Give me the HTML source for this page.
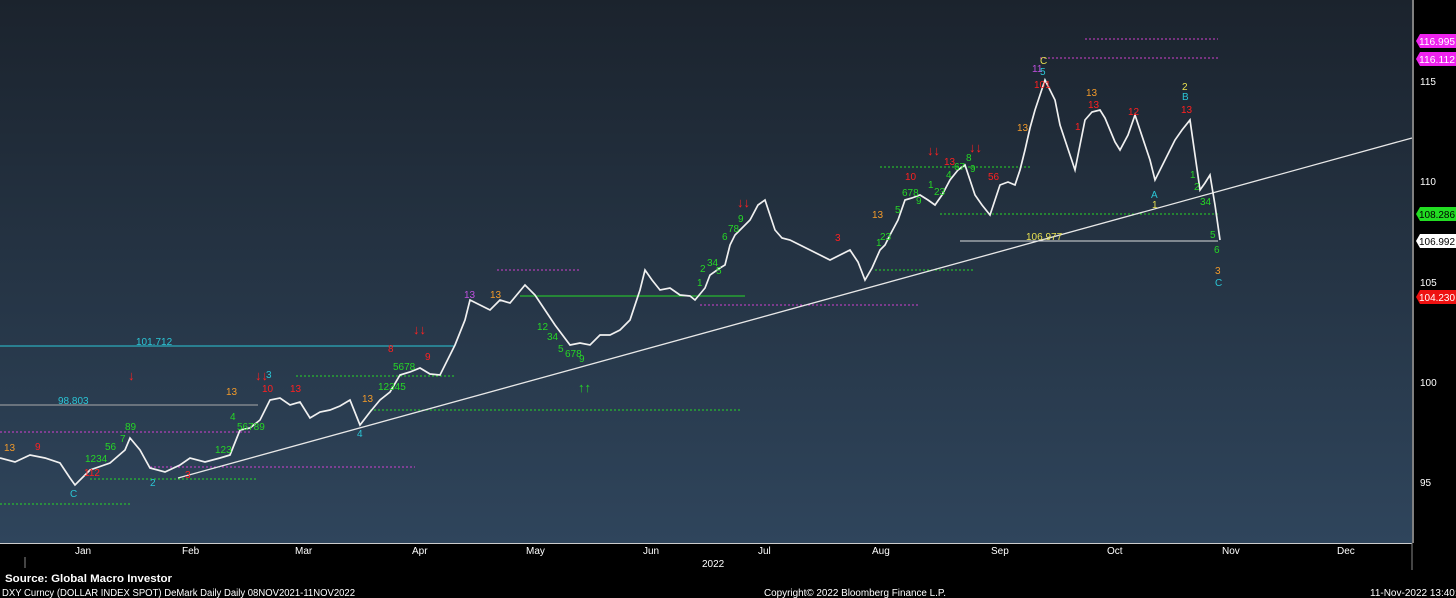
<!DOCTYPE html><html><head><meta charset="utf-8"><style>
body{margin:0;width:1456px;height:598px;background:#000;overflow:hidden;font-family:"Liberation Sans",sans-serif}
svg{position:absolute;left:0;top:0}
</style></head><body>
<svg width="1456" height="598" viewBox="0 0 1456 598" font-family="Liberation Sans, sans-serif">
<defs><linearGradient id="g" x1="0" y1="0" x2="0" y2="1"><stop offset="0" stop-color="#1b232d"/><stop offset="1" stop-color="#2f455c"/></linearGradient></defs>
<rect x="0" y="0" width="1412" height="543" fill="url(#g)"/>
<line x1="1413" y1="0" x2="1413" y2="543" stroke="#aaa" stroke-width="1.5"/>
<line x1="0" y1="543.5" x2="1412" y2="543.5" stroke="#ccc"/>
<line x1="1412" y1="543" x2="1412" y2="570" stroke="#888"/>
<g fill="none" stroke-width="1">
<line x1="1085" y1="39" x2="1218" y2="39" stroke="#d040d0" stroke-dasharray="2,2"/>
<line x1="1040" y1="58" x2="1218" y2="58" stroke="#d040d0" stroke-dasharray="2,2"/>
<line x1="497" y1="270" x2="580" y2="270" stroke="#d040d0" stroke-dasharray="2,2"/>
<line x1="0" y1="432" x2="250" y2="432" stroke="#d040d0" stroke-dasharray="2,2"/>
<line x1="150" y1="467" x2="415" y2="467" stroke="#d040d0" stroke-dasharray="2,2"/>
<line x1="700" y1="305" x2="920" y2="305" stroke="#d040d0" stroke-dasharray="2,2"/>
<line x1="0" y1="346" x2="455" y2="346" stroke="#2bc6d6"/>
<line x1="0" y1="405" x2="258" y2="405" stroke="#aaa"/>
<line x1="520" y1="296" x2="745" y2="296" stroke="#27d827"/>
<line x1="960" y1="241" x2="1218" y2="241" stroke="#ddd"/>
<line x1="0" y1="504" x2="132" y2="504" stroke="#27d827" stroke-dasharray="2,2"/>
<line x1="90" y1="479" x2="258" y2="479" stroke="#27d827" stroke-dasharray="2,2"/>
<line x1="370" y1="410" x2="742" y2="410" stroke="#27d827" stroke-dasharray="2,2"/>
<line x1="875" y1="270" x2="973" y2="270" stroke="#27d827" stroke-dasharray="2,2"/>
<line x1="940" y1="214" x2="1218" y2="214" stroke="#27d827" stroke-dasharray="2,2"/>
<line x1="880" y1="167" x2="1030" y2="167" stroke="#27d827" stroke-dasharray="2,2"/>
<line x1="296" y1="376" x2="455" y2="376" stroke="#27d827" stroke-dasharray="2,2"/>
<line x1="178" y1="478" x2="1412" y2="138" stroke="#e8e8e8" stroke-width="1.3"/>
<polyline stroke="#f0f0f0" stroke-width="1.7" points="0,458 15,462 30,455 45,458 60,463 70,478 75,485 90,470 110,463 125,450 130,438 140,450 150,468 165,472 180,465 190,458 205,462 220,458 230,455 240,430 250,428 260,420 270,400 280,398 290,405 300,402 310,418 320,412 330,410 340,406 350,400 360,425 370,412 380,400 390,392 400,375 410,372 420,368 430,374 440,375 455,345 465,320 470,300 480,305 490,310 500,300 510,303 525,285 535,295 545,310 555,325 570,345 580,343 590,345 600,335 610,335 620,330 630,320 640,290 645,270 652,280 660,290 670,288 680,295 690,296 695,300 705,288 710,275 720,268 725,265 730,245 735,235 742,228 750,220 758,205 765,200 770,215 775,230 782,238 790,240 800,245 810,250 820,255 830,260 840,255 850,250 858,262 865,280 872,268 880,250 885,245 890,235 898,220 905,200 912,198 920,195 928,200 935,205 942,195 950,180 958,170 965,165 970,180 975,195 982,205 990,215 995,200 1000,185 1008,182 1015,185 1020,170 1025,150 1030,128 1035,110 1040,95 1045,80 1050,90 1055,100 1060,125 1065,140 1070,155 1075,170 1080,145 1085,120 1092,112 1100,110 1105,118 1110,130 1115,142 1120,150 1128,135 1135,115 1140,130 1145,145 1150,160 1155,180 1160,170 1165,160 1170,150 1175,140 1182,130 1190,120 1195,155 1200,190 1205,183 1210,175 1215,205 1220,240"/>
</g>
<g font-size="10">
<text x="136" y="345" fill="#2bc6d6">101.712</text>
<text x="58" y="404" fill="#2bc6d6">98.803</text>
<text x="1026" y="240" fill="#e8e050">106.977</text>
<g fill="#ff2020"><text x="35" y="450">9</text><text x="84" y="476">112</text><text x="185" y="478">3</text><text x="262" y="392">10</text><text x="290" y="392">13</text><text x="388" y="352">8</text><text x="425" y="360">9</text><text x="835" y="241">3</text><text x="905" y="180">10</text><text x="1034" y="88">101</text><text x="1088" y="108">13</text><text x="1128" y="115">12</text><text x="1181" y="113">13</text><text x="988" y="180">56</text><text x="944" y="165">13</text><text x="1075" y="130">1</text></g>
<g fill="#26d626"><text x="85" y="462">1234</text><text x="105" y="450">56</text><text x="120" y="442">7</text><text x="125" y="430">89</text><text x="215" y="453">123</text><text x="230" y="420">4</text><text x="237" y="430">56789</text><text x="378" y="390">12345</text><text x="393" y="370">5678</text><text x="537" y="330">12</text><text x="547" y="340">34</text><text x="558" y="352">5</text><text x="565" y="357">678</text><text x="579" y="362">9</text><text x="697" y="286">1</text><text x="700" y="272">2</text><text x="707" y="266">34</text><text x="716" y="274">5</text><text x="722" y="240">6</text><text x="728" y="232">78</text><text x="738" y="222">9</text><text x="876" y="246">1</text><text x="880" y="240">23</text><text x="895" y="213">5</text><text x="902" y="196">678</text><text x="916" y="204">9</text><text x="928" y="188">1</text><text x="934" y="195">23</text><text x="946" y="178">4</text><text x="954" y="170">67</text><text x="966" y="161">8</text><text x="970" y="172">9</text><text x="1190" y="178">1</text><text x="1194" y="190">2</text><text x="1200" y="205">34</text><text x="1210" y="238">5</text><text x="1214" y="253">6</text></g>
<g fill="#f29a2a"><text x="4" y="451">13</text><text x="226" y="395">13</text><text x="362" y="402">13</text><text x="490" y="298">13</text><text x="872" y="218">13</text><text x="1017" y="131">13</text><text x="1086" y="96">13</text><text x="1215" y="274">3</text></g>
<g fill="#c050e0"><text x="464" y="298">13</text><text x="1032" y="72">11</text></g>
<g fill="#2bc6d6"><text x="70" y="497">C</text><text x="150" y="486">2</text><text x="266" y="378">3</text><text x="357" y="437">4</text><text x="1040" y="75">5</text><text x="1151" y="198">A</text><text x="1182" y="100">B</text><text x="1215" y="286">C</text></g>
<g fill="#e8e050"><text x="1182" y="90">2</text><text x="1152" y="208">1</text><text x="1040" y="64">C</text></g>
<g fill="#ff2020" font-size="13" font-weight="bold"><text x="128" y="380">↓</text><text x="255" y="380">↓↓</text><text x="413" y="334">↓↓</text><text x="737" y="207">↓↓</text><text x="927" y="155">↓↓</text><text x="969" y="152">↓↓</text></g>
<g fill="#26d626" font-size="13" font-weight="bold"><text x="578" y="392">↑↑</text></g>
</g>
<g font-size="10" fill="#fff">
<text x="1420" y="85">115</text><text x="1420" y="185">110</text><text x="1420" y="286">105</text><text x="1420" y="386">100</text><text x="1420" y="486">95</text>
<path d="M1420,34 h36 v14 h-36 l-4,-7z" fill="#ee22ee"/><text x="1419" y="45" textLength="36" lengthAdjust="spacingAndGlyphs">116.995</text>
<path d="M1420,52 h36 v14 h-36 l-4,-7z" fill="#ee22ee"/><text x="1419" y="63" textLength="36" lengthAdjust="spacingAndGlyphs">116.112</text>
<path d="M1420,207 h36 v14 h-36 l-4,-7z" fill="#22dd22"/><text x="1419" y="218" fill="#000" textLength="36" lengthAdjust="spacingAndGlyphs">108.286</text>
<path d="M1420,234 h36 v14 h-36 l-4,-7z" fill="#fff"/><text x="1419" y="245" fill="#000" textLength="36" lengthAdjust="spacingAndGlyphs">106.992</text>
<path d="M1420,290 h36 v14 h-36 l-4,-7z" fill="#ee1111"/><text x="1419" y="301" textLength="36" lengthAdjust="spacingAndGlyphs">104.230</text>
</g>
<g font-size="10" fill="#fff">
<text x="75" y="554">Jan</text><text x="182" y="554">Feb</text><text x="295" y="554">Mar</text><text x="412" y="554">Apr</text><text x="526" y="554">May</text><text x="643" y="554">Jun</text><text x="758" y="554">Jul</text><text x="872" y="554">Aug</text><text x="991" y="554">Sep</text><text x="1107" y="554">Oct</text><text x="1222" y="554">Nov</text><text x="1337" y="554">Dec</text>
<text x="702" y="567">2022</text>
<text x="5" y="582" font-weight="bold" font-size="11" textLength="167" lengthAdjust="spacingAndGlyphs">Source:  Global Macro Investor</text>
<text x="2" y="596" textLength="353" lengthAdjust="spacingAndGlyphs">DXY Curncy (DOLLAR INDEX SPOT) DeMark Daily  Daily 08NOV2021-11NOV2022</text>
<text x="764" y="596" textLength="182" lengthAdjust="spacingAndGlyphs">Copyright© 2022 Bloomberg Finance L.P.</text>
<text x="1370" y="596" font-size="10">11-Nov-2022 13:40:59</text>
</g>
<line x1="25" y1="557" x2="25" y2="568" stroke="#888"/>
</svg>
</body></html>
